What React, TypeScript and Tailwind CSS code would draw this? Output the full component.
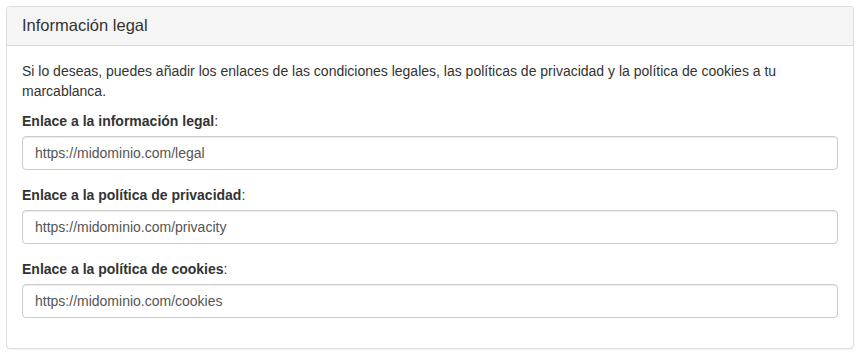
import React from 'react';

const fields = [
  { label: 'Enlace a la información legal', value: 'https://midominio.com/legal' },
  { label: 'Enlace a la política de privacidad', value: 'https://midominio.com/privacity' },
  { label: 'Enlace a la política de cookies', value: 'https://midominio.com/cookies' },
];

export default function App() {
  return (
    <div className="min-h-[358px] bg-white pl-[6px] pt-[6px] text-[14px] leading-[20px] text-[#333] [font-family:'Liberation_Sans',Arial,sans-serif]">
      {/* Legal info panel */}
      <div className="w-[848px] rounded-[4px] border border-[#ddd] bg-white shadow-[0_1px_1px_rgba(0,0,0,0.05)]">
        <div className="rounded-t-[3px] border-b border-[#ddd] bg-[#f5f5f5] px-[15px] py-[10px]">
          <h3 className="text-[16.5px] leading-[17.6px] text-[#333]">Información legal</h3>
        </div>
        <div className="p-[15px]">
          <p className="mb-[10px]">
            Si lo deseas, puedes añadir los enlaces de las condiciones legales, las políticas de privacidad y la política de cookies a tu marcablanca.
          </p>
          {fields.map((f) => (
            <div key={f.label} className="mb-[15px]">
              <label className="mb-[5px] block">
                <span className="font-bold">{f.label}</span>:
              </label>
              <input
                type="text"
                defaultValue={f.value}
                className="block h-[34px] w-full rounded-[4px] border border-[#ccc] bg-white px-[12px] py-[6px] text-[14px] text-[#555] shadow-[inset_0_1px_1px_rgba(0,0,0,0.075)] outline-none"
              />
            </div>
          ))}
        </div>
      </div>
    </div>
  );
}
